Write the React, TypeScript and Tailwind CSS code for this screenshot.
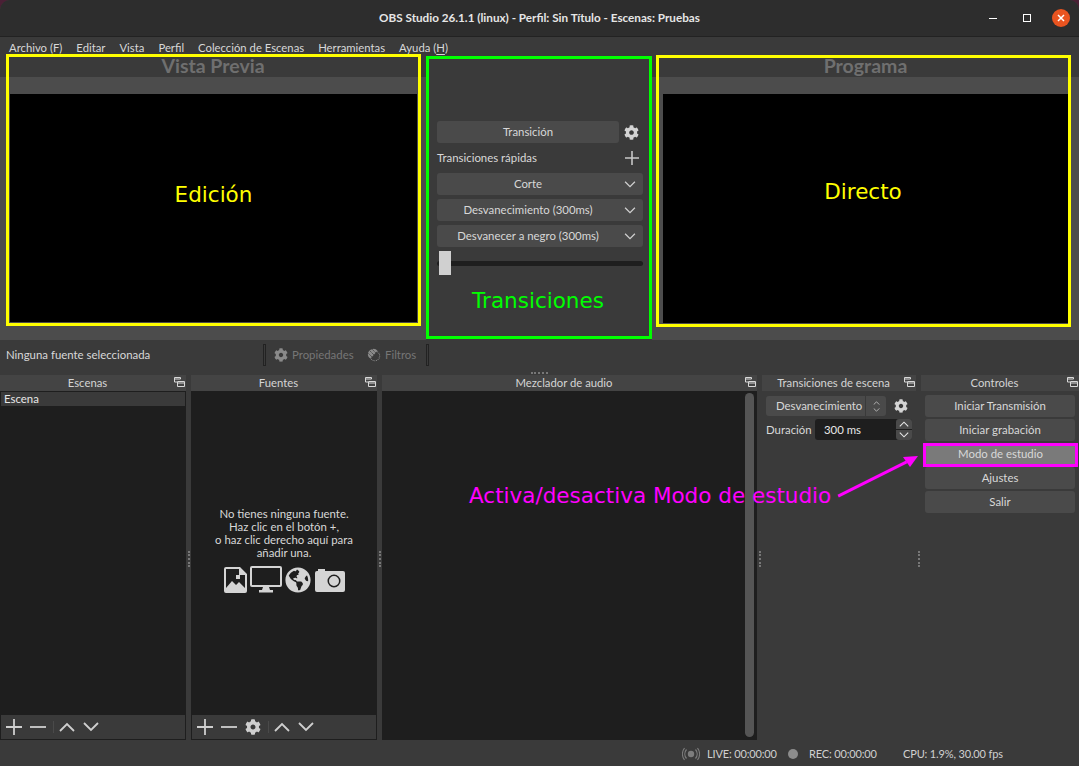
import {FaCog, FaGlobeAmericas} from "react-icons/fa";
import type {ReactNode} from "react";

// ------------------------------------------------------------------------------------------------

const Chevron = ({up = false, className = ""}: {up?: boolean; className?: string}) => (
  <svg viewBox="0 0 16 10" className={className} fill="none" stroke="currentColor" strokeWidth="1.8">
    <path d={up ? "M1 9 8 2l7 7" : "M1 1l7 7 7-7"} />
  </svg>
);

const Plus = ({className = ""}: {className?: string}) => (
  <svg viewBox="0 0 16 16" className={className} fill="none" stroke="currentColor" strokeWidth="1.8">
    <path d="M8 0v16M0 8h16" />
  </svg>
);

const Minus = () => (
  <svg viewBox="0 0 16 16" className="w-4 h-4" fill="none" stroke="currentColor" strokeWidth="1.8">
    <path d="M0 8h16" />
  </svg>
);

const FloatIcon = () => (
  <svg viewBox="0 0 11 10" className="w-[11px] h-[10px]" fill="none" stroke="#d8d8d8" strokeWidth="1">
    <path d="M.5.5h6v1.5h-6zM.5 2v3h2.5" />
    <path d="M3.500 4.500h7v5h-7zM3.500 6h7" />
  </svg>
);

const ImageIcon = () => (
  <svg viewBox="0 0 23 26" className="w-[23px] h-[26px]" fill="#d4d4d4">
    <path
      fillRule="evenodd"
      d="M2 0h14l7 7v17a2 2 0 0 1-2 2H2a2 2 0 0 1-2-2V2a2 2 0 0 1 2-2zm0 2v19l6-7 4 4 3-3 6 6V8h-6V2z"
    />
    <rect x="12" y="8" width="4" height="4" />
  </svg>
);

const MonitorIcon = () => (
  <svg viewBox="0 0 32 27" className="w-[32px] h-[27px]" fill="#d4d4d4">
    <path fillRule="evenodd" d="M2 0h28a2 2 0 0 1 2 2v17a2 2 0 0 1-2 2H2a2 2 0 0 1-2-2V2a2 2 0 0 1 2-2zm0 2v17h28V2z" />
    <path d="M13 21h6l1 3h3v2.500H9V24h3z" />
  </svg>
);

const CameraIcon = () => (
  <svg viewBox="0 0 30 24" className="w-[30px] h-[24px]" fill="#d4d4d4">
    <path
      fillRule="evenodd"
      d="M2 3h1V1h7v2h18a2 2 0 0 1 2 2v17a2 2 0 0 1-2 2H2a2 2 0 0 1-2-2V5a2 2 0 0 1 2-2zm17 3.500a6.500 6.500 0 1 0 0 13 6.500 6.500 0 0 0 0-13zm0 1.500a5 5 0 1 1 0 10 5 5 0 0 1 0-10z"
    />
  </svg>
);

const FilterIcon = () => (
  <svg viewBox="0 0 16 16" className="w-[14px] h-[14px]">
    <path d="M7 1a6 6 0 0 0-6 6c0 2 1 4 3 5l8-9a6 6 0 0 0-5-2z" fill="#8a8a8a" />
    <path d="M3 3l9 9M1.500 6l8 8M6 1.500l8 8" stroke="#3a3a3a" strokeWidth="0.8" />
    <circle cx="9" cy="9" r="5.500" fill="none" stroke="#8a8a8a" strokeWidth="1.200" strokeDasharray="1 1" />
  </svg>
);

const RadioIcon = () => (
  <svg viewBox="0 0 18 14" className="w-[18px] h-[14px]" fill="none" stroke="#7d7d7d" strokeWidth="1.200">
    <circle cx="9" cy="7" r="3.200" fill="#7d7d7d" stroke="none" />
    <path d="M4.500 2.500a7 7 0 0 0 0 9M13.500 2.500a7 7 0 0 1 0 9M2.500 1a10 10 0 0 0 0 12M15.500 1a10 10 0 0 1 0 12" />
  </svg>
);

// ------------------------------------------------------------------------------------------------

const Mnemonic = ({children}: {children: ReactNode}) => <span className="underline underline-offset-2">{children}</span>;

const SelectBtn = ({label}: {label: string}) => (
  <div className="relative h-[22px] rounded-[3px] bg-[#4a4a4a] flex items-center justify-center pr-[24px] text-[#d8d8d8]">
    {label}
    <Chevron className="absolute right-[7px] top-[8px] w-[12px] h-[7px] text-[#d0d0d0]" />
  </div>
);

const ControlBtn = ({label}: {label: string}) => (
  <div className="h-[22px] rounded-[3px] bg-[#4a4a4a] flex items-center justify-center text-[#d8d8d8]">{label}</div>
);

const Dock = ({title, width, children}: {title: string; width: string; children: ReactNode}) => (
  <div className={`flex flex-col shrink-0 ${width}`}>
    <div className="relative h-4 shrink-0 bg-[#444444] flex items-center justify-center pr-[11px] text-[11.3px] text-[#d4d4d4]">
      {title}
      <div className="absolute right-[1px] top-[2px] flex">
        <FloatIcon />
      </div>
    </div>
    {children}
  </div>
);

const Splitter = ({width = "w-[5px]"}: {width?: string}) => (
  <div className={`${width} shrink-0 flex flex-col items-center justify-center pt-[2px]`}>
    <div className="w-[2px] h-[16px] border-l-2 border-dotted border-[#777777]" />
  </div>
);

const ListToolbar = ({gear = false}: {gear?: boolean}) => (
  <div className="h-[25px] shrink-0 flex items-center pl-[5px] bg-[#3a3a3a] border-x border-b border-[#1e1e1e] text-[#cfcfcf]">
    <Plus className="w-4 h-4" />
    <div className="ml-2">
      <Minus />
    </div>
    {gear && <FaCog className="ml-2 w-4 h-4" />}
    <div className="ml-[7px] w-px h-[12px] bg-[#4a4a4a]" />
    <Chevron up className="ml-[5px] w-4 h-[10px]" />
    <Chevron className="ml-2 w-4 h-[10px]" />
  </div>
);

// ------------------------------------------------------------------------------------------------

export default function App() {
  return (
    <div className="relative w-[1079px] h-[766px] overflow-hidden bg-[#4a2035] text-[11.4px] leading-none whitespace-nowrap font-['Lato','Open_Sans',sans-serif]">
      <div className="h-full flex flex-col rounded-t-[10px] overflow-hidden bg-[#3a3a3a]">
        {/* Title bar */}
        <div className="relative h-[37px] shrink-0 bg-[#2d2d2d] border-b border-[#222222] flex items-center justify-center text-[11.7px] font-bold text-[#e6e6e6]">
          OBS Studio 26.1.1 (linux) - Perfil: Sin Título - Escenas: Pruebas
          <div className="absolute right-[9px] top-[9px] flex items-center">
            <div className="w-2 h-px bg-white mr-[26px]" />
            <div className="w-2 h-2 border border-white mr-[21px]" />
            <div className="w-[18px] h-[18px] rounded-full bg-[#e95420] flex items-center justify-center">
              <svg viewBox="0 0 8 8" className="w-2 h-2" stroke="white" strokeWidth="1.500">
                <path d="M1 1l6 6M7 1 1 7" />
              </svg>
            </div>
          </div>
        </div>

        {/* Menu */}
        <div className="h-[18px] shrink-0 flex items-center gap-[14px] pl-[9px] pt-[3px] text-[11.3px] text-[#d8d8d8]">
          <span>
            Archivo (<Mnemonic>F</Mnemonic>)
          </span>
          <span>
            <Mnemonic>E</Mnemonic>ditar
          </span>
          <span>
            <Mnemonic>V</Mnemonic>ista
          </span>
          <span>
            <Mnemonic>P</Mnemonic>erfil
          </span>
          <span>
            Colección de <Mnemonic>E</Mnemonic>scenas
          </span>
          <span>
            Herramien<Mnemonic>t</Mnemonic>as
          </span>
          <span>
            Ayuda (<Mnemonic>H</Mnemonic>)
          </span>
        </div>

        {/* Preview row */}
        <div className="h-[285px] shrink-0 flex">
          <div className="relative w-[426px] shrink-0 flex flex-col">
            <div className="h-[22px] shrink-0 flex items-center justify-center text-[19.5px] font-bold text-[#6f6f6f] pb-[1px]">
              Vista Previa
            </div>
            <div className="flex-1 bg-[#4c4c4c] pt-[17px] pb-[18px] pl-[10px] pr-[9px] flex">
              <div className="flex-1 bg-black flex items-center justify-center pb-[26px] text-[21.5px] text-[#ffff00] font-['DejaVu_Sans',sans-serif]">
                Edición
              </div>
            </div>
            <div className="absolute left-[6px] top-[-1px] w-[415px] h-[272px] border-[3px] border-[#ffff00]" />
          </div>

          <div className="relative w-[226px] shrink-0 mt-[1px] mb-[1px] border-[3px] border-[#00ff00] bg-[#3a3a3a] flex flex-col pt-[62px] pl-[8px] pr-[6px] gap-[4px] text-[#d8d8d8]">
            <div className="flex items-center justify-between">
              <div className="w-[182px] h-[22px] rounded-[3px] bg-[#4a4a4a] flex items-center justify-center">Transición</div>
              <FaCog className="w-[15px] h-[15px] text-[#d4d4d4] mr-[4px]" />
            </div>
            <div className="flex items-center justify-between h-[22px]">
              <span>Transiciones rápidas</span>
              <Plus className="w-[14px] h-[14px] text-[#c8c8c8] mr-[4px]" />
            </div>
            <SelectBtn label="Corte" />
            <SelectBtn label="Desvanecimiento (300ms)" />
            <SelectBtn label="Desvanecer a negro (300ms)" />
            <div className="relative h-[24px] flex items-center">
              <div className="w-full h-[5px] rounded-full bg-[#1e1e1e] mt-[1px]" />
              <div className="absolute left-[2px] top-0 w-[12px] h-[24px] bg-[#d0d0d0]" />
            </div>
            <div className="mt-[11px] pr-[4px] text-center text-[#00ff00] text-[21.5px] font-['DejaVu_Sans',sans-serif]">Transiciones</div>
          </div>

          <div className="relative flex-1 flex flex-col">
            <div className="h-[22px] shrink-0 flex items-center justify-center text-[19.5px] font-bold text-[#6f6f6f] pb-[1px]">
              Programa
            </div>
            <div className="flex-1 bg-[#4c4c4c] pt-[17px] pb-[17px] pl-[11px] pr-[10px] flex">
              <div className="flex-1 bg-black flex items-center justify-center pb-[34px] pr-[6px] text-[21.5px] text-[#ffff00] font-['DejaVu_Sans',sans-serif]">
                Directo
              </div>
            </div>
            <div className="absolute left-[4px] top-0 w-[415px] h-[272px] border-[3px] border-[#ffff00]" />
          </div>
        </div>

        {/* Source toolbar */}
        <div className="h-[30px] shrink-0 flex items-center pl-[6px] text-[#d8d8d8]">
          <span className="w-[257px] shrink-0">Ninguna fuente seleccionada</span>
          <div className="w-[3px] h-[22px] border border-[#222222]" />
          <FaCog className="ml-[8px] w-[14px] h-[14px] text-[#8a8a8a]" />
          <span className="ml-[4px] w-[62px] text-[#767676]">Propiedades</span>
          <div className="ml-[13px]">
            <FilterIcon />
          </div>
          <span className="ml-[4px] w-[32px] text-[#767676]">Filtros</span>
          <div className="ml-[9px] w-[3px] h-[22px] border border-[#222222]" />
        </div>

        {/* Horizontal splitter */}
        <div className="h-[5px] shrink-0 flex items-center justify-center">
          <div className="w-[17px] h-[2px] border-t-2 border-dotted border-[#777777]" />
        </div>

        {/* Docks */}
        <div className="h-[365px] shrink-0 flex">
          <Dock title="Escenas" width="w-[186px]">
            <div className="flex-1 bg-[#1e1e1e] pt-px px-px">
              <div className="h-[14px] flex items-center pl-[3px] bg-[#3a3a3a] text-[#e8e8e8]">Escena</div>
            </div>
            <ListToolbar />
          </Dock>
          <Splitter />
          <Dock title="Fuentes" width="w-[186px]">
            <div className="flex-1 bg-[#1e1e1e] flex flex-col items-center justify-center pb-[6px] text-[#d8d8d8] leading-[13px] text-center">
              <p>No tienes ninguna fuente.</p>
              <p>Haz clic en el botón +,</p>
              <p>o haz clic derecho aquí para</p>
              <p>añadir una.</p>
              <div className="mt-[7px] flex items-center gap-[3px]">
                <ImageIcon />
                <MonitorIcon />
                <FaGlobeAmericas className="w-[26px] h-[26px] text-[#d4d4d4]" />
                <div className="ml-[1px]">
                  <CameraIcon />
                </div>
              </div>
            </div>
            <ListToolbar gear />
          </Dock>
          <Splitter />
          <Dock title="Mezclador de audio" width="w-[375px]">
            <div className="h-[350px] bg-[#1e1e1e] flex justify-end pt-[2px] pr-[3px] pb-[3px]">
              <div className="w-[9px] rounded-full bg-[#555555]" />
            </div>
          </Dock>
          <Splitter />
          <Dock title="Transiciones de escena" width="w-[154px]">
            <div className="px-[4px] pt-[5px] text-[#d8d8d8]">
              <div className="flex items-center gap-[8px]">
                <div className="w-[120px] h-[20px] rounded-[3px] bg-[#4a4a4a] flex items-center pl-[10px]">
                  <span className="flex-1">Desvanecimiento</span>
                  <div className="w-[21px] h-full border-l border-[#3a3a3a] flex flex-col items-center justify-center gap-[3px]">
                    <Chevron up className="w-[7px] h-[4px]" />
                    <Chevron className="w-[7px] h-[4px]" />
                  </div>
                </div>
                <FaCog className="w-[14px] h-[14px] text-[#d4d4d4]" />
              </div>
              <div className="mt-[3px] flex items-center">
                <span className="w-[49px]">Duración</span>
                <div className="relative w-[97px] h-[21px] rounded-[3px] bg-[#1e1e1e] flex items-center pl-[9px] text-[#e8e8e8]">
                  300 ms
                  <div className="absolute right-0 top-0 w-[16px] h-full flex flex-col gap-px">
                    <div className="flex-1 rounded-t-[3px] bg-[#4a4a4a] flex items-center justify-center">
                      <Chevron up className="w-[10px] h-[6px]" />
                    </div>
                    <div className="flex-1 rounded-b-[3px] bg-[#4a4a4a] flex items-center justify-center">
                      <Chevron className="w-[10px] h-[6px]" />
                    </div>
                  </div>
                </div>
              </div>
            </div>
          </Dock>
          <Splitter />
          <Dock title="Controles" width="flex-1">
            <div className="pt-[4px] pl-[4px] pr-[4px] flex flex-col gap-[2px]">
              <ControlBtn label="Iniciar Transmisión" />
              <ControlBtn label="Iniciar grabación" />
              <div className="h-[24px] -ml-[2px] -mr-[3px] -mb-[2px] pb-[2px] border-[3px] border-[#ff00ff] bg-[#7a7a7a] flex items-center justify-center text-[#d8d8d8]">
                Modo de estudio
              </div>
              <ControlBtn label="Ajustes" />
              <ControlBtn label="Salir" />
            </div>
          </Dock>
        </div>

        {/* Status bar */}
        <div className="flex-1 flex items-center justify-end pr-[75px] pt-px text-[11px] tracking-[-0.15px] text-[#d0d0d0]">
          <RadioIcon />
          <span className="ml-[7px] w-[70px]">LIVE: 00:00:00</span>
          <div className="ml-[11px] w-[10px] h-[10px] rounded-full bg-[#8c8c8c]" />
          <span className="ml-[11px] w-[67px]">REC: 00:00:00</span>
          <span className="ml-[27px] w-[101px]">CPU: 1.9%, 30.00 fps</span>
        </div>
      </div>

      {/* Annotation over the docks */}
      <div className="absolute left-[469px] top-[483px] text-[21.5px] leading-[26px] text-[#ff00ff] whitespace-nowrap font-['DejaVu_Sans',sans-serif]">
        Activa/desactiva Modo de estudio
      </div>
      <svg className="absolute left-[830px] top-[450px] w-[95px] h-[55px]" viewBox="0 0 95 55" fill="#ff00ff">
        <path d="M7.500 44.800 76 10.500l1.300 2.700L8.800 47.500z" />
        <path d="M88 6 73 7l7 10z" />
      </svg>
    </div>
  );
}
